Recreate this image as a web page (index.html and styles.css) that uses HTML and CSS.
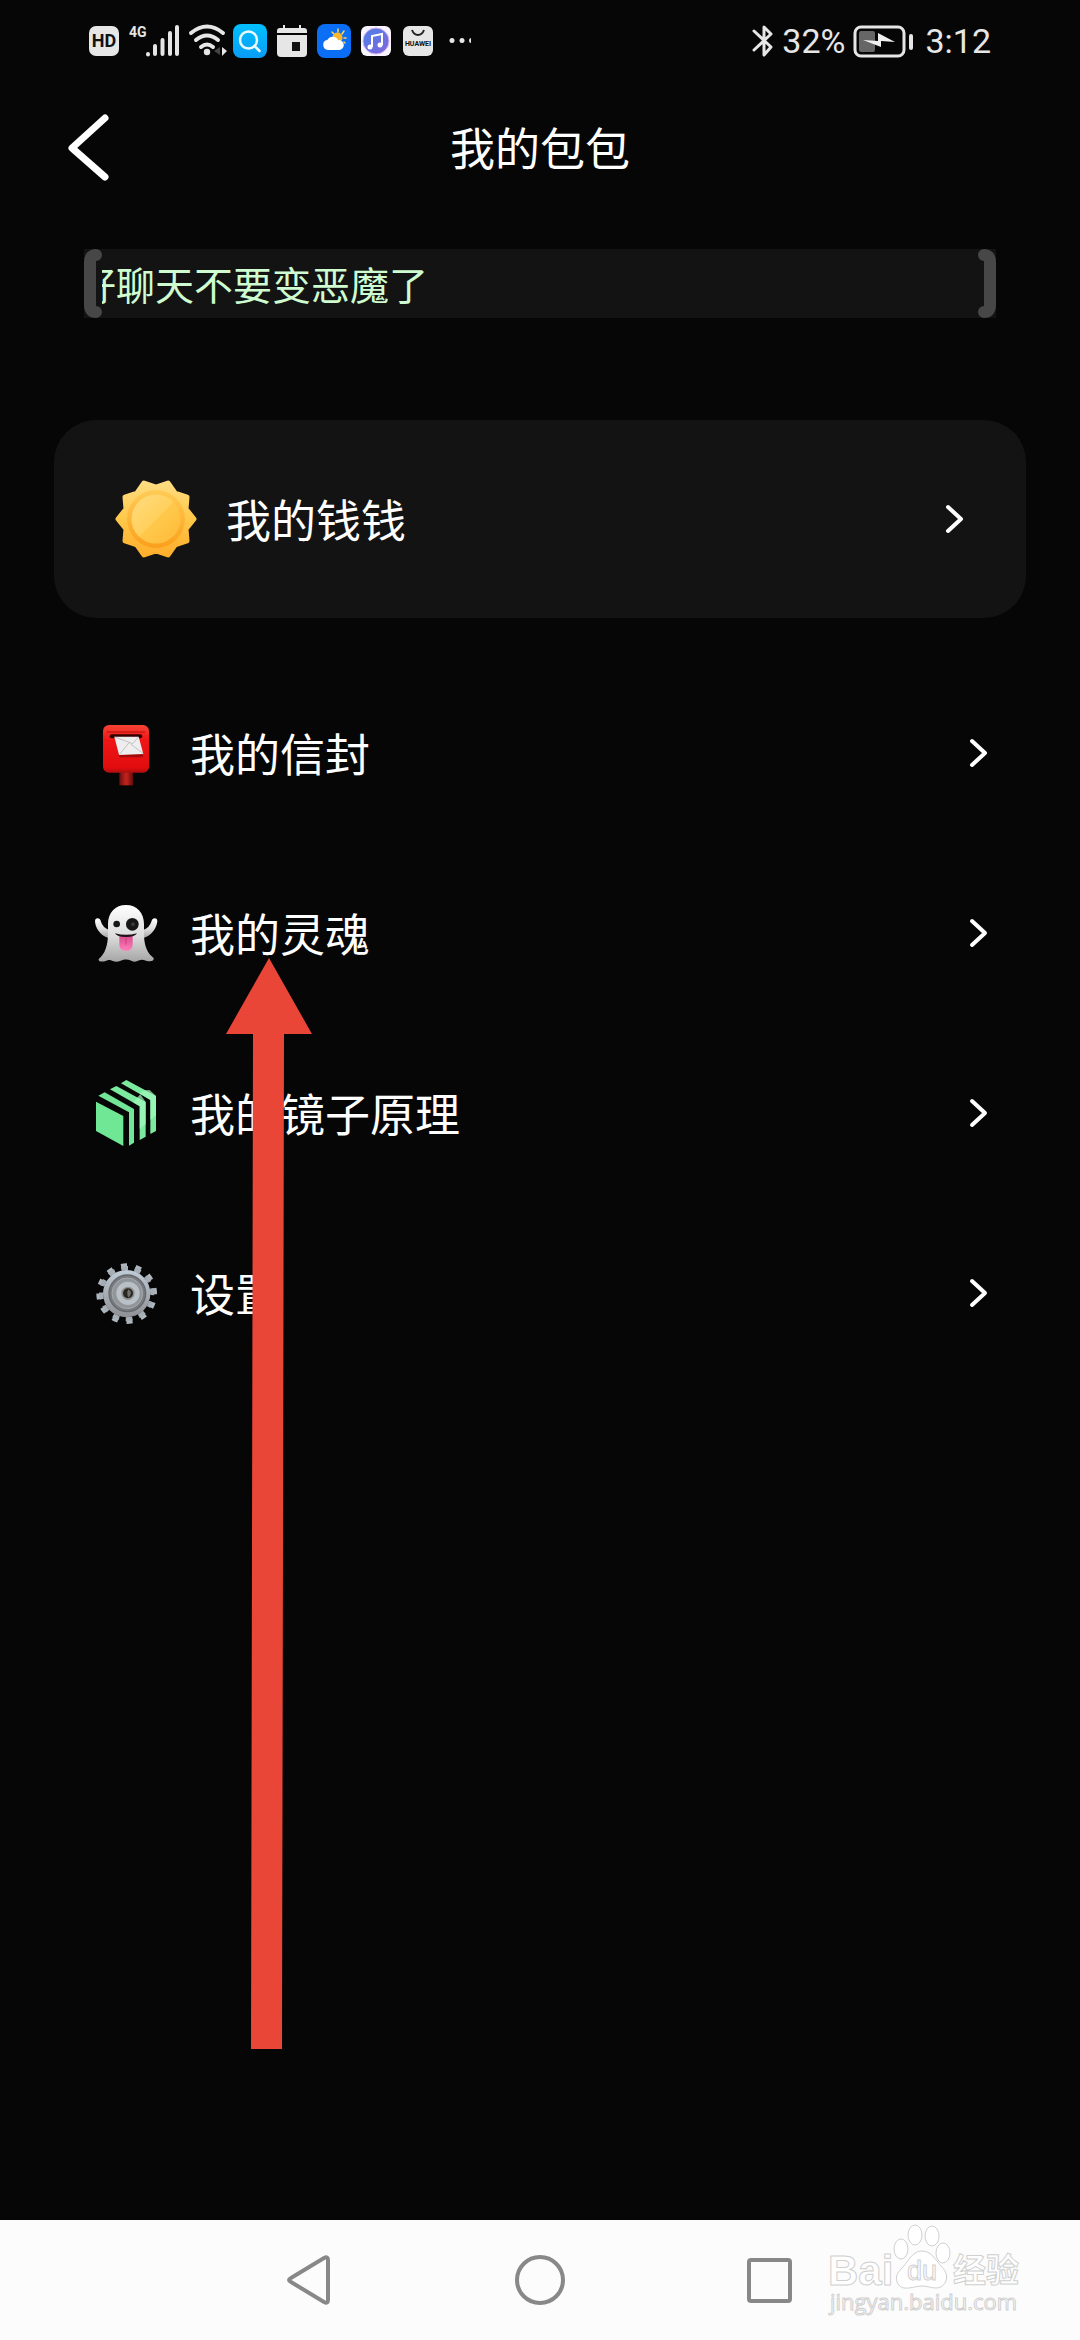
FILE: index.html
```html
<!DOCTYPE html>
<html lang="zh-CN">
<head>
<meta charset="utf-8">
<meta name="viewport" content="width=device-width, initial-scale=1">
<title>我的包包</title>
<link rel="stylesheet" href="styles.css">
</head>
<body>
<div class="status">
  <div class="status-left">
    <svg class="ic30" viewBox="0 0 30 30"><rect width="30" height="30" rx="7" fill="#e6e6e6"/><text x="15" y="21" class="hd">HD</text></svg>
    <svg class="signal" viewBox="0 0 52 34"><text x="0" y="13" class="net">4G</text><g stroke="#e6e6e6" stroke-width="4" stroke-linecap="round"><path d="M19 30v.5M26 22v8M33.500 16v14M41 9v21M48 3v27"/></g></svg>
    <svg class="wifi" viewBox="0 0 38 34"><g fill="none" stroke="#e6e6e6" stroke-width="4" stroke-linecap="round"><path d="M2 9q16-13 32 0M7 16q11-9 22 0M12 23q6-5 12 0"/></g><circle cx="18" cy="28" r="3.200" fill="#e6e6e6"/><path d="M31 23v8l-6-4z" fill="#444"/><path d="M33 23l5 4-5 5z" fill="#e6e6e6"/></svg>
    <svg class="ic34" viewBox="0 0 34 34"><defs><linearGradient id="sg" x2="0" y2="1"><stop stop-color="#00c0ff"/><stop offset="1" stop-color="#0a9cf5"/></linearGradient></defs><rect width="34" height="34" rx="8" fill="url(#sg)"/><g fill="none" stroke="#e8fbff" stroke-width="2.500" stroke-linecap="round"><circle cx="15.500" cy="16" r="8.500"/><path d="M21.500 22l5 5"/></g></svg>
    <svg class="ic30" viewBox="0 0 30 32"><path d="M0 8V6q0-3 3-3h3V0h2v3h14V0h2v3h3q3 0 3 3v2z" fill="#e6e6e6"/><path d="M0 10h30v18q0 4-4 4H4q-4 0-4-4z" fill="#e6e6e6"/><rect x="15" y="17" width="8" height="9" fill="#111"/></svg>
    <svg class="ic34" viewBox="0 0 34 34"><rect width="34" height="34" rx="8" fill="#0a6ff5"/><g stroke="#ffd45a" stroke-width="1.500" stroke-linecap="round"><path d="M21 5v3M15 8l2 2M27 7l-2 3M29 14h-2M27 18l1 1"/></g><circle cx="20.500" cy="13.500" r="5" fill="#ffb62c"/><path d="M11 26a5.200 5.200 0 0 1-.5-10.300A6 6 0 0 1 21 16a5 5 0 0 1 1.500 10z" fill="#fff"/></svg>
    <svg class="ic30" viewBox="0 0 30 30"><defs><linearGradient id="mg" x2="1" y2="1"><stop stop-color="#4c80e8"/><stop offset="1" stop-color="#8067dc"/></linearGradient></defs><rect width="30" height="30" rx="6" fill="#f8f5ff"/><circle cx="15" cy="15" r="13" fill="url(#mg)" stroke="#d9b5f0"/><path d="M11 21V10l10-2v11" fill="none" stroke="#fff" stroke-width="2"/><circle cx="9" cy="21" r="2.500" fill="#fff"/><circle cx="19" cy="19" r="2.500" fill="#fff"/></svg>
    <svg class="ic30 store" viewBox="0 0 30 30"><rect width="30" height="30" rx="6" fill="#e6e6e6"/><path d="M9 4q2 5 6 5t6-5" fill="none" stroke="#222" stroke-width="2"/><text x="15" y="20" class="brand">HUAWEI</text></svg>
    <svg class="dots" viewBox="0 0 22 30"><g fill="#e6e6e6"><circle cx="3" cy="14.500" r="2.500"/><circle cx="13" cy="14.500" r="2.500"/><path d="M22 12q-2 0-2 2.500t2 2.500z"/></g></svg>
  </div>
  <div class="status-right">
    <svg class="bt" viewBox="0 0 22 34"><path d="M2 7l17 16-7 8V3l7 7L2 26" fill="none" stroke="#e6e6e6" stroke-width="3" stroke-linejoin="round" stroke-linecap="round"/></svg>
    <span>32%</span>
    <svg class="battery" viewBox="0 0 60 34"><rect x="2" y="3" width="49" height="29" rx="6" fill="none" stroke="#e6e6e6" stroke-width="3"/><rect x="6" y="7" width="16" height="21" rx="2" fill="#666"/><path d="M10 16l15 1V9l17 9-14-1v6z" fill="#f0f0f0"/><rect x="56" y="10" width="4" height="16" rx="2" fill="#e6e6e6"/></svg>
    <span class="clock">3:12</span>
  </div>
</div>

<header class="header">
  <button class="back" aria-label="返回"><svg viewBox="0 0 42 67"><path d="M37 4L4 34l33 29" fill="none" stroke="#fff" stroke-width="7" stroke-linecap="round" stroke-linejoin="round"/></svg></button>
  <h1>我的包包</h1>
</header>

<main class="main">
  <div class="ticker">
    <svg class="bracket" viewBox="0 0 18 69"><path d="M12 6Q6 6 6 13V56Q6 63 12 63"/></svg>
    <div class="track"><p>好聊天不要变恶魔了</p></div>
    <svg class="bracket" viewBox="0 0 18 69"><path d="M6 6Q12 6 12 13V56Q12 63 6 63"/></svg>
  </div>

  <a class="card" href="#money">
    <svg class="sun" viewBox="-42 -42 84 84">
      <defs><linearGradient id="su" x2="0" y2="1"><stop stop-color="#ffdc80"/><stop offset=".5" stop-color="#ffc84a"/><stop offset="1" stop-color="#ffae2c"/></linearGradient>
      <linearGradient id="sr" x2="0" y2="1"><stop stop-color="#ffcc55"/><stop offset="1" stop-color="#fb9f1c"/></linearGradient>
      <linearGradient id="si" x2="1" y2="1"><stop stop-color="#ffdc80"/><stop offset=".5" stop-color="#ffd05c"/><stop offset=".5" stop-color="#ffc94c"/><stop offset="1" stop-color="#ffb936"/></linearGradient></defs>
      <path d="M38 0L30 10 31 22 19 26 12 36 0 32-12 36-19 26-31 22-30 10-38 0-30-10-31-22-19-26-12-36 0-32 12-36 19-26 31-22 30-10z" fill="url(#su)" stroke="url(#su)" stroke-width="5" stroke-linejoin="round"/>
      <circle r="29" fill="url(#sr)"/><circle r="24.500" fill="url(#si)"/>
    </svg>
    <span class="label">我的钱钱</span>
    <svg class="chev" viewBox="0 0 19 30"><path d="M3 3l13 12L3 27"/></svg>
  </a>

  <nav class="list">
    <a class="row" href="#mail">
      <svg class="icon" viewBox="42 63 192 192">
        <defs><linearGradient id="mb" x2="0" y2="1"><stop stop-color="#f64436"/><stop offset=".3" stop-color="#ef1716"/><stop offset=".9" stop-color="#e20c0e"/><stop offset="1" stop-color="#a81010"/></linearGradient>
        <linearGradient id="mp"><stop stop-color="#6b0d0d"/><stop offset=".5" stop-color="#c42420"/><stop offset="1" stop-color="#650b0b"/></linearGradient></defs>
        <rect x="118" y="212" width="41" height="44" fill="url(#mp)"/>
        <rect x="69" y="75" width="138" height="143" rx="18" fill="url(#mb)"/>
        <path d="M80 96h116" stroke="#b80d0d" stroke-width="3"/>
        <rect x="89" y="103" width="98" height="12" rx="6" fill="#300"/>
        <path d="M106 122l12 50h72l-4-12z" fill="#a30b0b"/>
        <path d="M103 110h73l14 52-73 3z" fill="#eee"/>
        <path d="M104 111l54 20 18-20M118 164l29-36M189 160l-37-28" fill="none" stroke="#aaa" stroke-width="2"/>
      </svg>
      <span class="label">我的信封</span>
      <svg class="chev" viewBox="0 0 19 30"><path d="M3 3l13 12L3 27"/></svg>
    </a>
    <a class="row" href="#soul">
      <svg class="icon" viewBox="42 603 192 192">
        <defs><linearGradient id="gh" x2="0" y2="1"><stop stop-color="#fff"/><stop offset=".55" stop-color="#dcdcdc"/><stop offset="1" stop-color="#a5a5a5"/></linearGradient>
        <linearGradient id="to" x2="0" y2="1"><stop stop-color="#d9488a"/><stop offset="1" stop-color="#ff82bd"/></linearGradient></defs>
        <path d="M85 714C60 706 46 684 45 664q0-9 8-9 7 0 10 10 5 17 24 25zM191 714c25-8 39-30 41-50q0-9-8-9-7 0-10 10-5 17-24 25z" fill="url(#gh)"/>
        <path d="M84 672c0-34 22-57 54-57s54 23 54 57v30c0 35 10 58 29 72 2 9-9 12-23 8-8-3-13-4-20-1-11 5-16 5-24 1-12-5-20-5-32 0-9 4-15 4-24 1-8-4-11-4-21 0-13 4-23 1-21-6 19-15 28-41 28-75z" fill="url(#gh)"/>
        <circle cx="110" cy="672" r="10" fill="#161616"/><circle cx="157" cy="673" r="19" fill="#161616"/><circle cx="159" cy="673" r="6" fill="#383838"/>
        <path d="M118 706h40v26q0 21-20 21t-20-21z" fill="url(#to)"/><path d="M138 712v22" stroke="#ce407e" stroke-width="3"/>
        <path d="M105 700q33 9 66 0-5 11-33 11t-33-11z" fill="#201216"/>
      </svg>
      <span class="label">我的灵魂</span>
      <svg class="chev" viewBox="0 0 19 30"><path d="M3 3l13 12L3 27"/></svg>
    </a>
    <a class="row" href="#mirror">
      <svg class="icon" viewBox="42 423 192 192">
        <path d="M48 485l82 43v90l-82-45z" fill="#70e794"/>
        <path d="M55 467l19-10 88 50v101l-15 9V517z" fill="#72e596"/><path d="M90 448l19-10 88 48v104l-18 10V499z" fill="#7bea9f"/><path d="M123 430l16-10 89 48v105l-17 9V480z" fill="#7bea9f"/>
        <path d="M181 463l16 23v66l-18 14v-67l-20-12zM195 451l14-1 19 18v57l-17 14v-59l-32-20z" fill="#a3f8bd" opacity=".7"/>
      </svg>
      <span class="label">我的镜子原理</span>
      <svg class="chev" viewBox="0 0 19 30"><path d="M3 3l13 12L3 27"/></svg>
    </a>
    <a class="row" href="#settings">
      <svg class="icon" viewBox="42 963 192 192">
        <defs><linearGradient id="ge" x2="0" y2="1"><stop stop-color="#c0ccd6"/><stop offset="1" stop-color="#8f9095"/></linearGradient></defs>
        <g fill="none" transform="rotate(18 140 1061)">
          <circle cx="140" cy="1061" r="81" stroke="#aeb6be" stroke-width="20" pathLength="120" stroke-dasharray="4 6"/>
          <circle cx="140" cy="1061" r="77" stroke="#a5adb5" stroke-width="12" pathLength="120" stroke-dasharray="5 5" stroke-dashoffset=".5"/>
        </g>
        <circle cx="140" cy="1061" r="71" fill="url(#ge)"/>
        <circle cx="142" cy="1060" r="55" fill="#777b80" stroke="#66696e" stroke-width="4"/>
        <circle cx="142" cy="1060" r="46" fill="#92969b" stroke="#a5a8ab" stroke-width="3"/>
        <circle cx="144" cy="1060" r="35" fill="#b9c0c6"/>
        <circle cx="144" cy="1060" r="20" fill="#8b8f93"/><circle cx="144" cy="1060" r="15" fill="#29251f"/><path d="M145 1048q16 10 0 25-7-13 0-25z" fill="#70706d"/>
      </svg>
      <span class="label">设置</span>
      <svg class="chev" viewBox="0 0 19 30"><path d="M3 3l13 12L3 27"/></svg>
    </a>
    <svg class="pointer" viewBox="0 0 88 1092" aria-hidden="true"><path d="M44 0L87 76H59L57 1091H26L28 76H1z" fill="#ea4637"/></svg>
  </nav>
</main>

<footer class="navbar">
  <button aria-label="后退"><svg viewBox="0 0 50 50"><path d="M38 3Q42 1 42 5V45Q42 49 38 47L5 27Q1 25 5 23Z"/></svg></button>
  <button aria-label="主页"><svg viewBox="0 0 50 50"><circle cx="25" cy="25" r="23"/></svg></button>
  <button aria-label="最近任务"><svg viewBox="0 0 50 50"><rect x="5" y="5" width="41" height="41" rx="2"/></svg></button>
  <svg class="mark" viewBox="0 0 200 100">
    <g class="wm">
      <text x="1" y="61" class="wm-b">Bai</text>
      <path d="M95 27c9 0 13 8 19 15 6 6 7 12 4 17-6 9-15 3-23 3s-19 6-24-2c-4-7 0-12 5-17 6-7 10-16 19-16z"/>
      <ellipse cx="74" cy="25" rx="7" ry="10"/><ellipse cx="88" cy="11" rx="7" ry="10"/><ellipse cx="105" cy="12" rx="7" ry="10"/><ellipse cx="116" cy="29" rx="7" ry="10"/>
      <text x="80" y="56" class="wm-d">du</text>
      <text x="126" y="58" class="wm-c">经验</text>
      <text x="3" y="86" class="wm-u">jingyan.baidu.com</text>
    </g>
  </svg>
</footer>
</body>
</html>
```

FILE: styles.css
```css
* { box-sizing: border-box; }
body {
  margin: 0;
  min-height: 100vh;
  display: flex;
  flex-direction: column;
  background: #060606;
  color: #fff;
  font-family: "Noto Sans CJK SC", sans-serif;
}
svg { display: block; flex: none; overflow: visible; }
button { background: none; border: 0; padding: 0; cursor: pointer; }
a { color: inherit; text-decoration: none; }

.status {
  display: flex;
  justify-content: space-between;
  align-items: center;
  height: 82px;
  padding: 0 89px;
  font: 34px/40px Roboto, sans-serif;
  color: #e6e6e6;
}
.status-left, .status-right { display: flex; align-items: center; gap: 10px; }
.status-right { gap: 8px; }
.ic30 { width: 30px; height: 32px; }
.ic34 { width: 34px; height: 34px; }
.signal { width: 52px; height: 34px; }
.wifi { width: 38px; height: 34px; margin: 0 -4px 0 -2px; }
.store { margin-left: 2px; }
.dots { width: 22px; height: 30px; margin-left: 6px; }
.bt { width: 22px; height: 34px; }
.battery { width: 60px; height: 34px; }
.clock { margin-left: 4px; }
.hd { font: 700 18px Roboto, sans-serif; text-anchor: middle; fill: #111; }
.net { font: 700 14px Roboto, sans-serif; fill: #e6e6e6; }
.brand { font: 700 7px Roboto, sans-serif; text-anchor: middle; fill: #111; }

.header {
  display: grid;
  grid-template-columns: 42px 1fr 42px;
  align-items: center;
  height: 130px;
  padding: 0 68px;
}
.back svg { width: 42px; height: 67px; }
.header h1 {
  margin: 0;
  text-align: center;
  font-size: 45px;
  font-weight: 400;
  line-height: 66px;
}

.main { flex: 1; padding: 37px 54px 0; }
.ticker {
  display: flex;
  height: 69px;
  margin: 0 30px;
  background: #131313;
  color: #cffbd0;
}
.bracket { width: 18px; height: 69px; fill: none; stroke: #474747; stroke-width: 12px; stroke-linecap: round; }
.track { flex: 1; overflow: hidden; }
.track p {
  margin: 0 0 0 -25px;
  font-size: 39px;
  line-height: 69px;
  white-space: nowrap;
}
.card {
  display: flex;
  align-items: center;
  gap: 28px;
  height: 198px;
  margin-top: 102px;
  padding: 0 62px 0 60px;
  border-radius: 42px;
  background: #131313;
}
.sun { width: 84px; height: 84px; }
.label { flex: 1; font-size: 45px; line-height: 66px; }
.chev {
  width: 19px;
  height: 30px;
  fill: none;
  stroke: #fff;
  stroke-width: 4px;
  stroke-linecap: round;
  stroke-linejoin: round;
}
.list { position: relative; margin-top: 45px; }
.row {
  display: flex;
  align-items: center;
  gap: 32px;
  height: 180px;
  padding: 0 38px 0 40px;
}
.icon { width: 64px; height: 64px; }
.pointer { position: absolute; left: 171px; top: 295px; width: 88px; height: 1092px; }

.navbar {
  position: relative;
  display: flex;
  justify-content: center;
  align-items: center;
  gap: 179px;
  height: 120px;
  background: #fcfcfc;
}
.navbar button svg { width: 50px; height: 50px; fill: none; stroke: #888; stroke-width: 4px; }
.mark { position: absolute; right: 53px; top: 4px; width: 200px; height: 100px; }
.wm { fill: #fff; stroke: #d0d0d0; stroke-width: 1px; }
.wm-b { font: 700 42px "Liberation Sans", sans-serif; }
.wm-d { font: 27px "Liberation Sans", sans-serif; }
.wm-c { font: 700 33px "Noto Sans CJK SC", sans-serif; }
.wm-u { font: 22px "Open Sans", sans-serif; }
```
